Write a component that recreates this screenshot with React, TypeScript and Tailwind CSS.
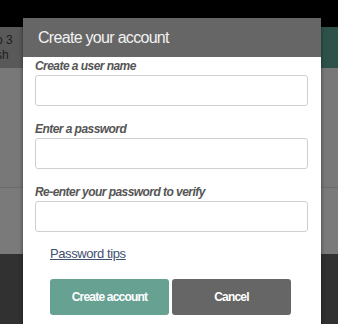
const font = { fontFamily: '"Liberation Sans", Arial, sans-serif' };

function Field({ label }: { label: string }) {
  return (
    <div className="flex flex-col">
      <label className="h-4 text-[12px] leading-4 font-bold italic tracking-[-0.55px] text-[#555]">{label}</label>
      <input
        type="text"
        className="mt-[1px] h-[31px] w-full rounded-[3px] border border-[#cfcfcf] bg-white px-2 outline-none"
      />
    </div>
  );
}

export default function App() {
  return (
    <div className="relative h-[324px] w-[338px] overflow-hidden bg-[#313131]" style={font}>
      {/* page behind the dimmed overlay */}
      <div className="h-[27px] bg-black" />
      <div className="flex h-[41px]">
        <div className="flex w-[60px] flex-col justify-center bg-[#595959] text-[12px] leading-[15px] text-[#1e1e1e]">
          <span className="-ml-[4px]">o 3</span>
          <span className="-ml-[4px]">sh</span>
        </div>
        <div className="flex-1 bg-[#595959]" />
        <div className="w-[40px] bg-[#2e5249]" />
      </div>
      <div className="h-[120px] border-b border-[#6c6c6c] bg-[#787878]" />
      <div className="h-[66px] bg-[#7a7a7a]" />

      {/* dialog */}
      <div className="absolute left-[23px] top-[18px] h-[320px] w-[298px] bg-white shadow-[0_0_4px_rgba(0,0,0,0.5)]">
        <div className="flex h-[39px] items-center bg-[#666666] pl-[15px]">
          <h2 className="text-[16px] tracking-[-0.7px] text-[#f2f2f2]">Create your account</h2>
        </div>
        <div className="flex flex-col px-[12px] pr-[13px] pt-[1px]">
          <Field label="Create a user name" />
          <div className="mt-[15px]">
            <Field label="Enter a password" />
          </div>
          <div className="mt-[15px]">
            <Field label="Re-enter your password to verify" />
          </div>
          <a
            href="#"
            className="ml-[15px] mt-[14px] self-start text-[13px] leading-4 tracking-[-0.4px] text-[#3f4f6e] underline"
          >
            Password tips
          </a>
          <div className="ml-[15px] mt-[17px] flex gap-[3px]">
            <button className="h-[36px] w-[119px] rounded-[3px] bg-[#66a192] text-[12px] font-bold tracking-[-0.8px] text-white">
              Create account
            </button>
            <button className="h-[36px] w-[119px] rounded-[3px] bg-[#666666] text-[12px] font-bold tracking-[-0.8px] text-white">
              Cancel
            </button>
          </div>
        </div>
      </div>
    </div>
  );
}
